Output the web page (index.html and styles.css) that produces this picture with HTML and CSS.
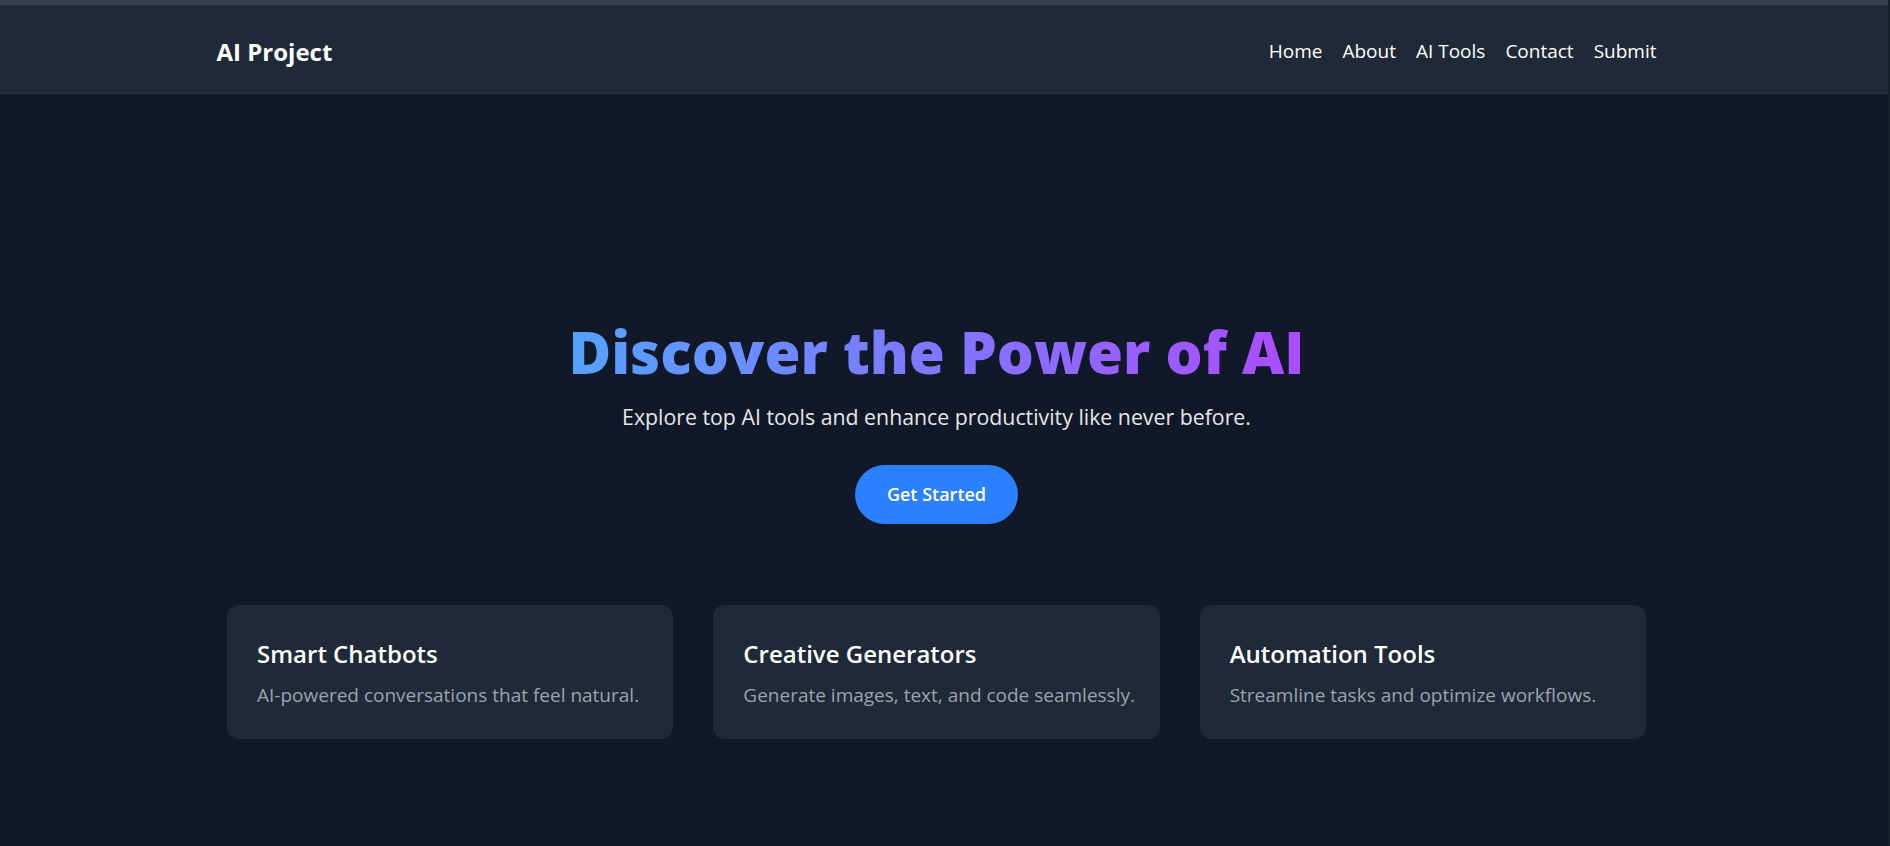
FILE: index.html
```html
<!DOCTYPE html>
<html lang="en">
<head>
<meta charset="utf-8">
<title>AI Project</title>
<link rel="stylesheet" href="styles.css">
</head>
<body>
<div class="chrome"></div>
<header class="navbar">
  <div class="nav-inner">
    <div class="logo">AI Project</div>
    <nav class="links">
      <a href="#">Home</a>
      <a href="#">About</a>
      <a href="#">AI Tools</a>
      <a href="#">Contact</a>
      <a href="#">Submit</a>
    </nav>
  </div>
</header>
<main class="hero">
  <h1 class="title">Discover the Power of AI</h1>
  <p class="subtitle">Explore top AI tools and enhance productivity like never before.</p>
  <a class="cta" href="#">Get Started</a>
  <section class="cards">
    <div class="card">
      <h3 class="card-title">Smart Chatbots</h3>
      <p class="card-text">AI-powered conversations that feel natural.</p>
    </div>
    <div class="card">
      <h3 class="card-title">Creative Generators</h3>
      <p class="card-text">Generate images, text, and code seamlessly.</p>
    </div>
    <div class="card">
      <h3 class="card-title">Automation Tools</h3>
      <p class="card-text">Streamline tasks and optimize workflows.</p>
    </div>
  </section>
</main>
</body>
</html>
```
FILE: styles.css
```css
html, body {
  margin: 0;
  padding: 0;
}
body {
  background: #111827;
  color: #ffffff;
  font-family: "Open Sans", "Noto Sans", sans-serif;
  height: 846px;
  overflow: hidden;
  border-right: 2px solid #1a202c;
  box-sizing: border-box;
}
.chrome {
  height: 5px;
  background: #393f4c;
}
.navbar {
  background: #1f2937;
  border-top: 1px solid #262d3a;
  border-bottom: 1px solid #273142;
  padding: 3px 15px 0 0;
  box-sizing: border-box;
  height: 89px;
}
.nav-inner {
  max-width: 1440px;
  margin: 0 auto;
  height: 100%;
  display: flex;
  align-items: center;
  justify-content: space-between;
}
.logo {
  font-size: 24px;
  font-weight: 700;
  color: #ffffff;
}
.links {
  display: flex;
  gap: 20px;
  font-size: 19px;
}
.links a {
  color: #ffffff;
  text-decoration: none;
}
.hero {
  padding: 222px 15px 0 0;
  text-align: center;
  display: flex;
  flex-direction: column;
  align-items: center;
}
.title {
  margin: 0;
  font-size: 58.3px;
  line-height: 72px;
  font-weight: 800;
  background: linear-gradient(90deg, #54a2ff, #ac4bff);
  -webkit-background-clip: text;
  background-clip: text;
  color: transparent;
  display: inline-block;
}
.subtitle {
  margin: 14px 0 0;
  font-size: 21.3px;
  line-height: 30px;
  color: #e5e7eb;
}
.cta {
  margin-top: 33px;
  display: inline-block;
  background: #2b80ff;
  color: #ffffff;
  text-decoration: none;
  font-size: 18px;
  line-height: 27px;
  font-weight: 600;
  padding: 16px 32px;
  border-radius: 999px;
}
.cards {
  margin-top: 81px;
  width: 1419px;
  display: grid;
  grid-template-columns: repeat(3, minmax(0, 1fr));
  gap: 40px;
  text-align: left;
}
.card {
  background: #1f2937;
  border-radius: 12px;
  padding: 34px 30px 30px;
  height: 134px;
  box-sizing: border-box;
}
.card-title {
  margin: 0;
  font-size: 24px;
  line-height: 30px;
  font-weight: 600;
  color: #ffffff;
}
.card-text {
  margin: 13px 0 0;
  font-size: 19px;
  line-height: 27px;
  color: #9ca3af;
  white-space: nowrap;
}
```
